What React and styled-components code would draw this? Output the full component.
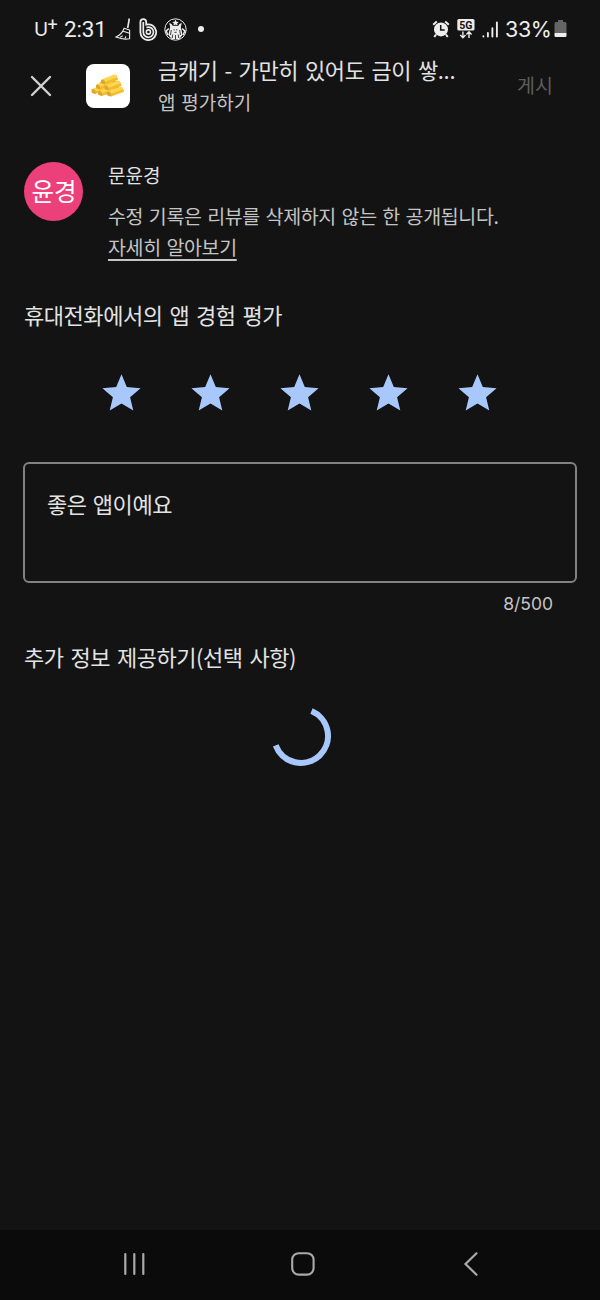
import styled, { createGlobalStyle } from "styled-components";

const GlobalStyle = createGlobalStyle`
    * {
        box-sizing: border-box;
    }

    body {
        margin: 0;
        background: #131313;
        font-family: "Noto Sans CJK KR", sans-serif;
    }
`;

const Screen = styled.div`
    display: flex;
    flex-direction: column;
    width: 600px;
    height: 1300px;
    background: #131313;
    color: #e3e3e3;
`;

const StatusBar = styled.div`
    display: flex;
    align-items: center;
    justify-content: space-between;
    height: 58px;
    padding: 0 33px 0 34px;
    color: #ededed;
`;

const StatusGroup = styled.div`
    display: flex;
    align-items: center;

    svg {
        display: block;
        flex: none;
    }
`;

const Carrier = styled.div`
    width: 30px;
    padding-top: 1px;
    font: 19px/24px Inter, sans-serif;
    letter-spacing: -0.6px;
    white-space: nowrap;

    sup {
        font: 18px/0 Roboto, sans-serif;
        vertical-align: 5px;
    }
`;

const Clock = styled.div`
    width: 49px;
    font: 22.5px/26px Roboto, sans-serif;
    letter-spacing: -0.2px;
`;

const Battery = styled.div`
    width: 49px;
    margin-left: 6px;
    font: 21.5px/26px Inter, sans-serif;
    letter-spacing: -0.4px;
`;

const Header = styled.header`
    display: flex;
    align-items: center;
    height: 56px;
    padding: 0 47px 0 30px;
`;

const AppIcon = styled.div`
    display: flex;
    align-items: center;
    justify-content: center;
    width: 44px;
    height: 44px;
    margin-left: 34px;
    border-radius: 8px;
    background: #fff;
`;

const HeaderText = styled.div`
    flex: 1;
    margin-left: 28px;
`;

const Title = styled.div`
    font-size: 22px;
    line-height: 32px;
    letter-spacing: -0.35px;
    word-spacing: 2.2px;
    white-space: nowrap;
`;

const Subtitle = styled.div`
    color: #c4c4c4;
    font-size: 19px;
    line-height: 34px;
    word-spacing: 1.5px;
`;

const PostButton = styled.button`
    padding: 0 0 2px;
    border: 0;
    background: none;
    color: #5e5e5e;
    font: 19.5px/28px "Noto Sans CJK KR", sans-serif;
`;

const Content = styled.main`
    flex: 1;
    padding: 44px 24px 0;
`;

const Profile = styled.section`
    display: flex;
    align-items: flex-start;
    height: 140px;
`;

const Avatar = styled.div`
    display: flex;
    align-items: center;
    justify-content: center;
    width: 59px;
    height: 59px;
    margin-top: 4px;
    padding: 0 0 2px 1px;
    border-radius: 50%;
    background: #ec407a;
    color: #fff;
    font-size: 24.5px;
`;

const ProfileText = styled.div`
    margin: 1px 0 0 25px;
    font-size: 19.5px;
    line-height: 31px;
    letter-spacing: -0.35px;
    word-spacing: 1.6px;
    white-space: nowrap;
`;

const Name = styled.div`
    margin-bottom: 10px;
    font-size: 19px;
    letter-spacing: 0;
`;

const Notice = styled.div`
    color: #c4c4c4;
`;

const Link = styled.a`
    color: #c4c4c4;
    text-decoration: underline;
    text-decoration-thickness: 1.5px;
    text-underline-offset: 4px;
`;

const SectionTitle = styled.h2`
    margin: 0;
    font-size: 22px;
    font-weight: 400;
    line-height: 32px;
    letter-spacing: -0.45px;
    word-spacing: 2.4px;
`;

const Stars = styled.div`
    display: flex;
    justify-content: space-between;
    margin: 44px 79px 51px 78px;
`;

const ReviewBox = styled.div`
    height: 121px;
    margin: 0 -1px;
    padding: 23px 22px;
    border: 2px solid #828282;
    border-radius: 6px;
    font-size: 22px;
    line-height: 32px;
    letter-spacing: -0.4px;
    word-spacing: 1.5px;
`;

const Counter = styled.div`
    margin: 9px 23px 24px 0;
    color: #c4c4c4;
    font: 17.5px/24px Inter, sans-serif;
    text-align: right;
`;

const Loading = styled.div`
    display: flex;
    justify-content: center;
    margin: 34px -1px 0 0;
`;

const NavBar = styled.nav`
    display: flex;
    align-items: center;
    justify-content: space-between;
    height: 70px;
    padding: 0 121px 2px 122px;
    background: #0b0b0b;
`;

const BroomIcon = () => (
    <svg width="18" height="24" viewBox="0 0 18 24" fill="none" stroke="#ededed" strokeWidth="1.1">
        <path d="M14.3 1.5 12.7 11" strokeWidth="1.6" />
        <path d="M9.2 11.2 14.6 13.1 14.6 21.7Q8 23 1 20 6.6 17.6 9.2 11.2Z" />
        <path d="M8.2 14.3 14.6 16.3M5 20.4 7.7 18.7M10 21.4 10.8 19.4" />
    </svg>
);

const BLogo = () => (
    <svg width="19" height="23" viewBox="0 0 19 23" fill="none" stroke="#ededed">
        <path d="M1.4 14V4.1A2.9 2.9 0 0 1 7.2 4.1V6.6A7.9 7.9 0 1 1 1.4 14Z" strokeWidth="1.8" />
        <path d="M4.3 4V14A5.1 5.1 0 1 0 7.4 9.5" strokeWidth="1.7" />
        <circle cx="9.4" cy="14" r="2.1" strokeWidth="1.6" />
    </svg>
);

const SirenLogo = () => (
    <svg width="23" height="23" viewBox="0 0 23 23">
        <circle cx="11.5" cy="11.5" r="10.7" fill="none" stroke="#ededed" strokeWidth="1" />
        <path d="m11.5 1.5 1 2.2 2.3.2-1.7 1.5.5 2.2-2.1-1.2-2.1 1.2.5-2.2-1.7-1.5 2.3-.2Z" fill="#ededed" />
        <path d="m5.2 4.8 2.6 1.5 1.2 2h5l1.2-2 2.6-1.5-1 4.5H6.2Z" fill="#ededed" />
        <path d="M6.2 9Q11.5 6.4 16.8 9L18.6 16.7 15.4 21H7.6L4.4 16.7Z" fill="#ededed" />
        <path d="M4.8 10.5 2.2 13l1.6 4M18.2 10.5l2.6 2.5-1.6 4" fill="none" stroke="#ededed" strokeWidth="1.5" />
        <path d="M9.6 11.8h1.3M12.1 11.8h1.3M10.4 14.3h2.2M7.3 12 6.5 17M15.7 12l.8 5M8.8 16.5l-.6 3.5M14.2 16.5l.6 3.5M11.5 17v4" stroke="#131313" strokeWidth=".8" />
    </svg>
);

const AlarmIcon = () => (
    <svg width="18" height="18" viewBox="0 0 18 18">
        <circle cx="9" cy="9.4" r="7" fill="#ededed" />
        <path d="M1.2 4.8 4.8 1.5M16.8 4.8 13.2 1.5M4 14.5 2.3 17M14 14.5l1.7 2.5" stroke="#ededed" strokeWidth="2" />
        <path d="M8.7 5v5h4" fill="none" stroke="#131313" strokeWidth="1.5" />
    </svg>
);

const NetworkIcon = () => (
    <svg width="18" height="20" viewBox="0 0 18 20">
        <rect x=".3" y="0" width="17.2" height="11.5" rx="1.5" fill="#ededed" />
        <text x="8.9" y="9.5" textAnchor="middle" fill="#131313" fontFamily="Roboto, sans-serif" fontSize="10.5" fontWeight="700">5G</text>
        <path d="M5.9 12.5v6M3.3 16l2.6 2.7L8.5 16M12 19v-6M9.4 15.4l2.6-2.7 2.6 2.7" fill="none" stroke="#ededed" strokeWidth="1.4" />
    </svg>
);

const SignalIcon = () => (
    <svg width="17" height="17" viewBox="0 0 17 17" stroke="#ededed" strokeWidth="1.9" strokeLinecap="round">
        <path d="M1.4 15.2v.4M5.9 12v3.6M10.4 7.2v8.4M14.9 1.4v14.2" />
    </svg>
);

const BatteryIcon = () => (
    <svg width="13" height="18" viewBox="0 0 13 18">
        <path d="M4 0h5v2h2a1.5 1.5 0 0 1 1.5 1.5V13H.5V3.5A1.5 1.5 0 0 1 2 2h2Z" fill="#656565" />
        <path d="M.5 13h12v2.7a1.3 1.3 0 0 1-1.3 1.3H1.8a1.3 1.3 0 0 1-1.3-1.3Z" fill="#ededed" />
    </svg>
);

const CloseIcon = () => (
    <svg width="22" height="22" viewBox="0 0 22 22" stroke="#d2d2d2" strokeWidth="2.4" strokeLinecap="round">
        <path d="m2 2 18 18M20 2 2 20" />
    </svg>
);

// bars are drawn from the back of the pile to the front
const goldBars = [
    { x: 0, y: 10 },
    { x: 4.5, y: 5.5 },
    { x: 9.5, y: 0.5 },
    { x: 6.5, y: 12 },
    { x: 13, y: 6.5 },
    { x: 15.5, y: 12.5 },
];

const GoldIcon = () => (
    <svg width="34" height="24" viewBox="0 0 34 24">
        <path d="M9 8 22 2 30 17 18 21 5 18Z" fill="#e5ad2c" />
        {goldBars.map(({ x, y }) => (
            <g key={`${x}-${y}`} transform={`translate(${x} ${y})`}>
                <path d="M.6 5.4 13.6.3 15.6.6 17.6 4.4 17 5.4 4.4 10 .8 8.8Z" fill="#f3bc2c" />
                <path d="M1.2 5 13.6.3 15.6.6 16.7 2.7 3.8 7.5Z" fill="#ffd650" />
                <path d="M.6 5.4 2.4 4.9 4.4 6.6 4.6 9.9.9 8.8Z" fill="#dca52d" />
            </g>
        ))}
    </svg>
);

const Star = () => (
    <svg width="39" height="37" viewBox="0 0 39 37">
        <path d="m19.5.3 5.3 12.7 13.8 1.2-10.5 9 3.2 13.4-11.8-7.1-11.8 7.1 3.2-13.4-10.5-9 13.8-1.2Z" fill="#a8c7fa" />
    </svg>
);

const Spinner = () => (
    <svg width="60" height="60" viewBox="0 0 60 60">
        <path d="M40.5 5.1A27 27 0 1 1 4.7 39.4" fill="none" stroke="#a8c7fa" strokeWidth="6" />
    </svg>
);

const RecentsIcon = () => (
    <svg width="24" height="24" viewBox="0 0 24 24" stroke="#aaa" strokeWidth="2.2" strokeLinecap="round">
        <path d="M3.3 2v20M12.3 2v20M21.3 2v20" />
    </svg>
);

const HomeIcon = () => (
    <svg width="24" height="24" viewBox="0 0 24 24">
        <rect x="1.2" y="1.2" width="21.4" height="21.4" rx="6.5" fill="none" stroke="#aaa" strokeWidth="2.1" />
    </svg>
);

const BackIcon = () => (
    <svg width="20" height="24" viewBox="0 0 20 24" fill="none" stroke="#aaa" strokeWidth="2.2" strokeLinecap="round">
        <path d="M17.5 1.3 6.5 12l11 10.7" />
    </svg>
);

const Dot = styled.div`
    width: 6px;
    height: 6px;
    margin-left: 11px;
    border-radius: 50%;
    background: #ededed;
`;

const IconRow = styled.div`
    display: flex;
    align-items: center;
    gap: ${({ $gap }) => $gap}px;
    margin-left: ${({ $left = 0 }) => $left}px;
`;

export default function App() {
    return (
        <Screen>
            <GlobalStyle />
            <StatusBar>
                <StatusGroup>
                    <Carrier>
                        U<sup>+</sup>
                    </Carrier>
                    <Clock>2:31</Clock>
                    <IconRow $gap={6} $left={2}>
                        <BroomIcon />
                        <BLogo />
                        <SirenLogo />
                    </IconRow>
                    <Dot />
                </StatusGroup>
                <StatusGroup>
                    <IconRow $gap={7}>
                        <AlarmIcon />
                        <NetworkIcon />
                        <SignalIcon />
                    </IconRow>
                    <Battery>33%</Battery>
                    <BatteryIcon />
                </StatusGroup>
            </StatusBar>
            <Header>
                <CloseIcon />
                <AppIcon>
                    <GoldIcon />
                </AppIcon>
                <HeaderText>
                    <Title>금캐기 - 가만히 있어도 금이 쌓...</Title>
                    <Subtitle>앱 평가하기</Subtitle>
                </HeaderText>
                <PostButton>게시</PostButton>
            </Header>
            <Content>
                <Profile>
                    <Avatar>윤경</Avatar>
                    <ProfileText>
                        <Name>문윤경</Name>
                        <Notice>수정 기록은 리뷰를 삭제하지 않는 한 공개됩니다.</Notice>
                        <Link>자세히 알아보기</Link>
                    </ProfileText>
                </Profile>
                <SectionTitle>휴대전화에서의 앱 경험 평가</SectionTitle>
                <Stars>
                    {[1, 2, 3, 4, 5].map((n) => (
                        <Star key={n} />
                    ))}
                </Stars>
                <ReviewBox>좋은 앱이예요</ReviewBox>
                <Counter>8/500</Counter>
                <SectionTitle>추가 정보 제공하기(선택 사항)</SectionTitle>
                <Loading>
                    <Spinner />
                </Loading>
            </Content>
            <NavBar>
                <RecentsIcon />
                <HomeIcon />
                <BackIcon />
            </NavBar>
        </Screen>
    );
}
